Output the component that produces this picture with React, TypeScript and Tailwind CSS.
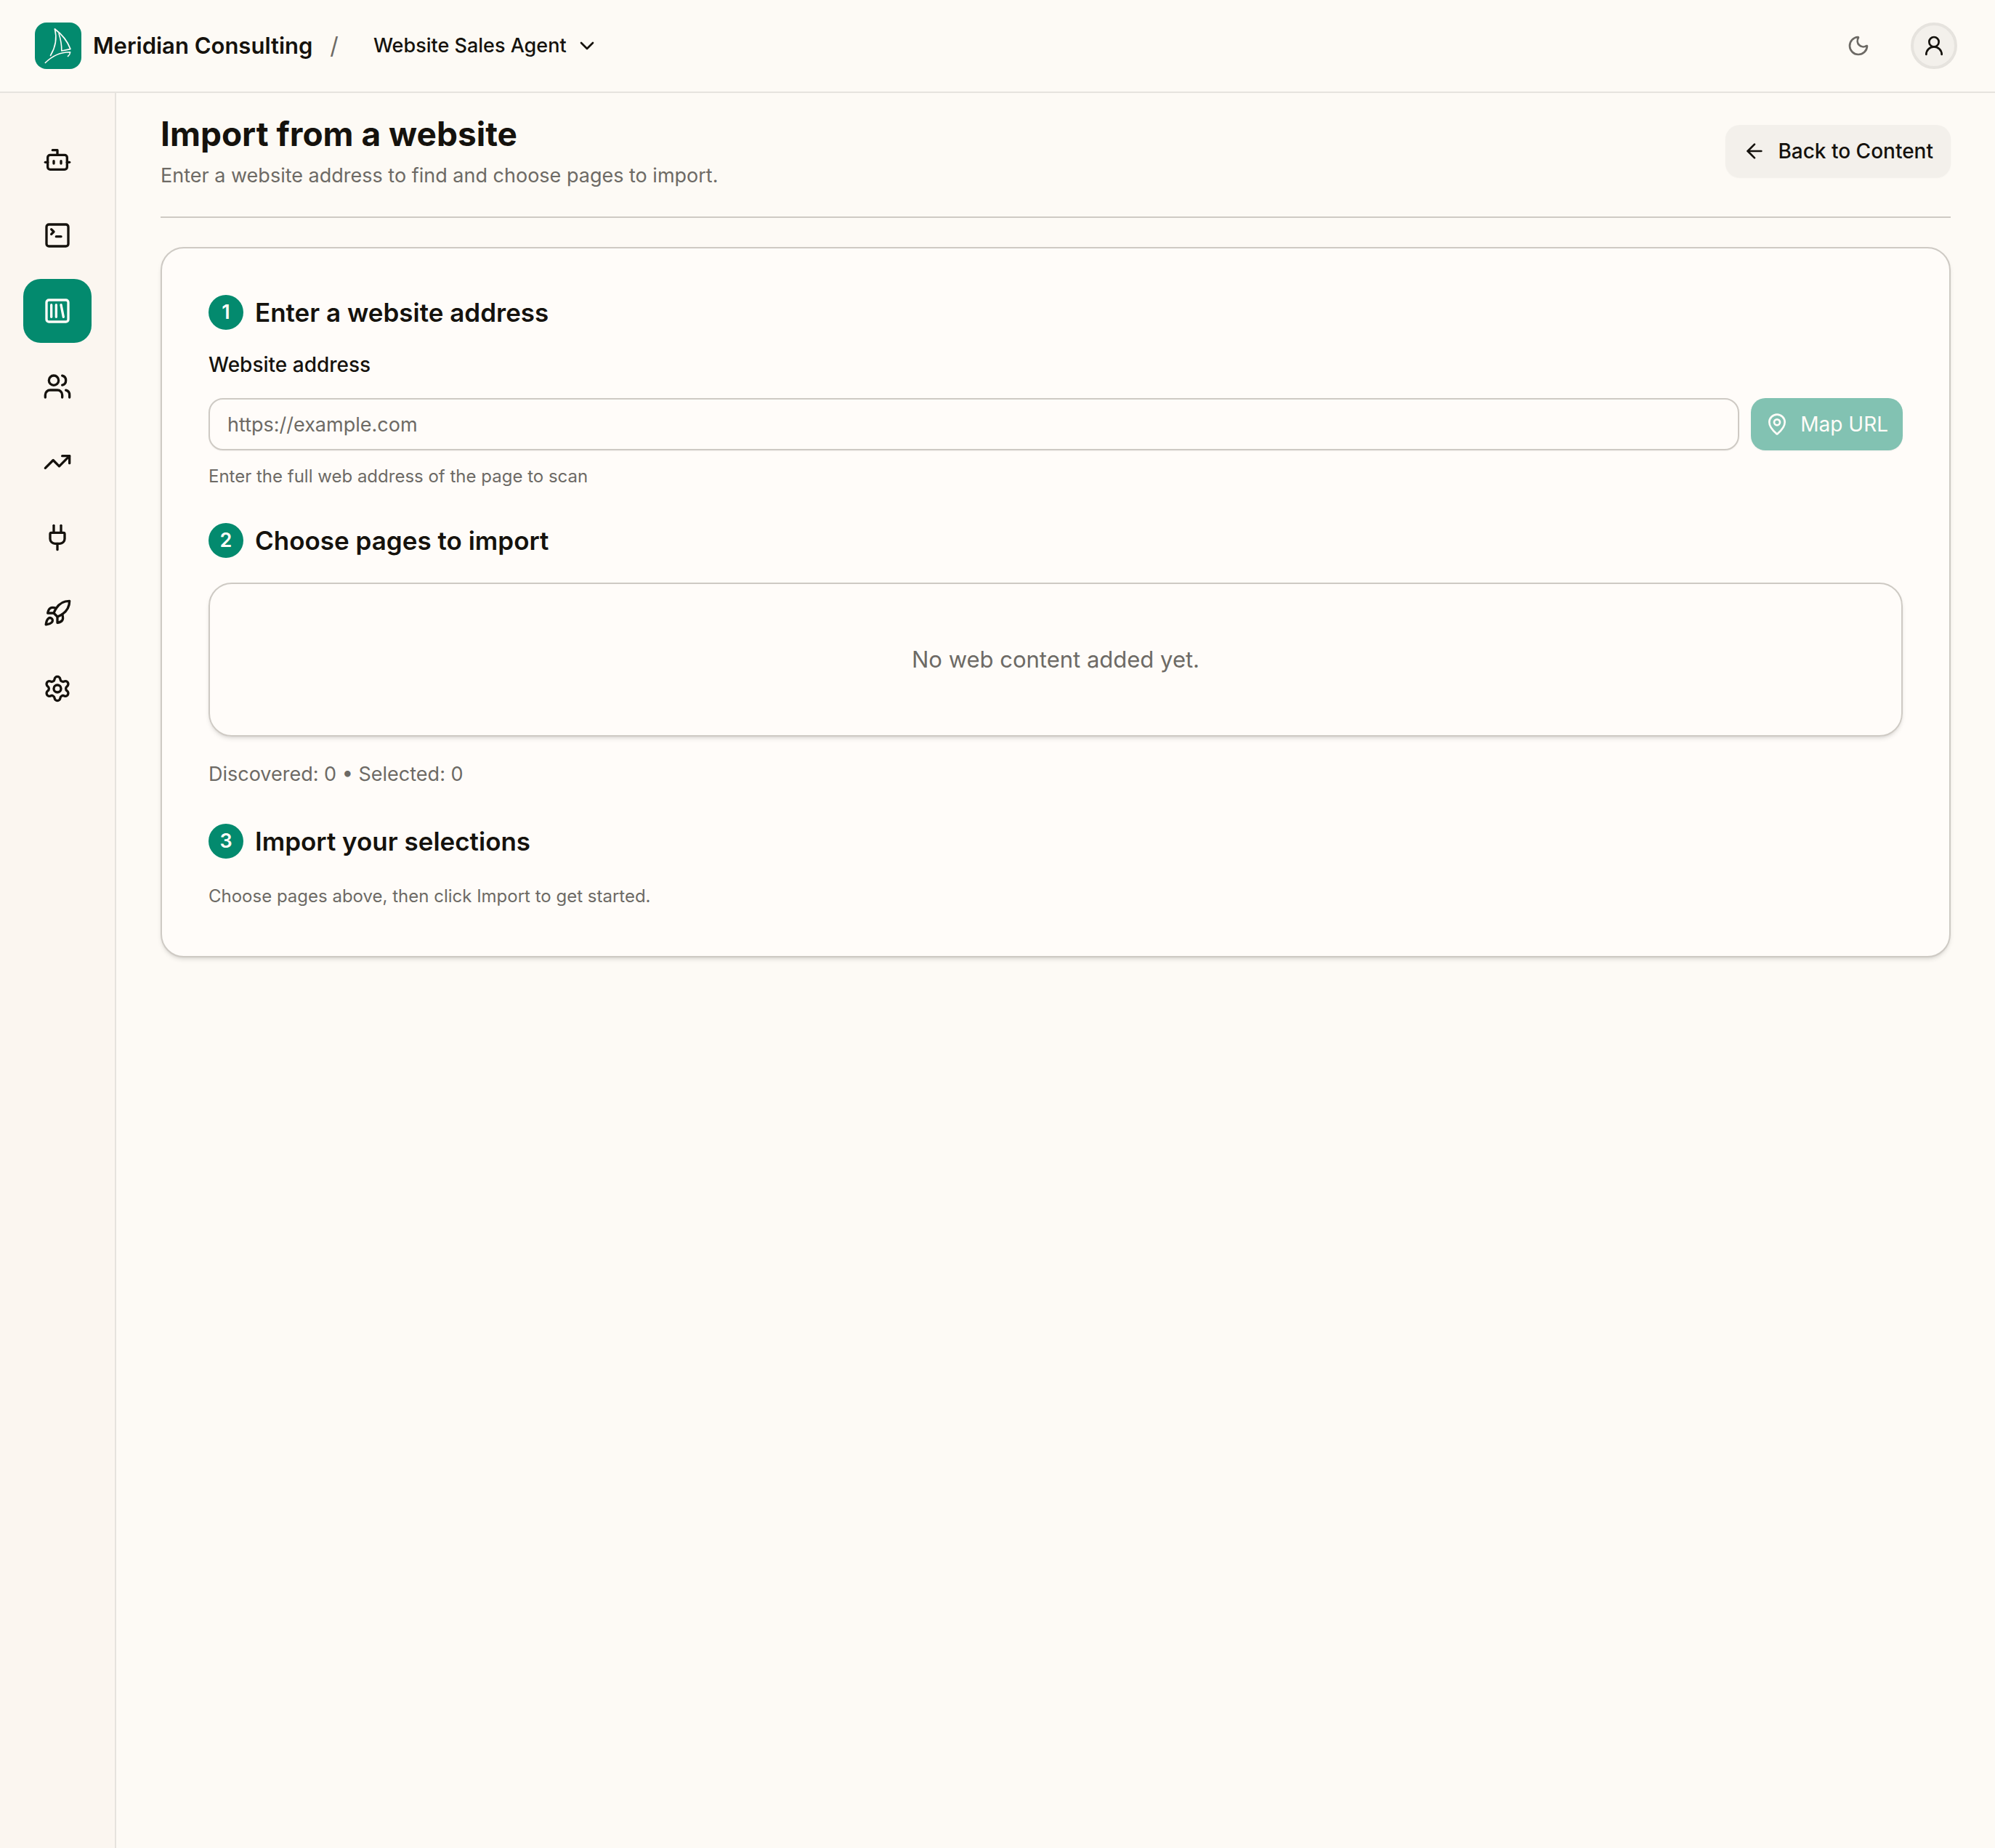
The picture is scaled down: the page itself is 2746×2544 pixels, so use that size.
import { useState } from "react";
import type { ReactNode } from "react";
import {
    ArrowLeft,
    Bot,
    ChevronDown,
    MapPin,
    Moon,
    Plug,
    Rocket,
    Settings,
    SquareLibrary,
    SquareTerminal,
    TrendingUp,
    UserRound,
    Users,
} from "lucide-react";

const navItems = [
    { label: "Agents", icon: Bot },
    { label: "Playground", icon: SquareTerminal },
    { label: "Content", icon: SquareLibrary },
    { label: "Leads", icon: Users },
    { label: "Analytics", icon: TrendingUp },
    { label: "Integrations", icon: Plug },
    { label: "Deploy", icon: Rocket },
    { label: "Settings", icon: Settings },
];

const Logo = () => (
    <span className="flex size-16 shrink-0 items-center justify-center rounded-2xl bg-[#038a6e]">
        <svg viewBox="0 0 64 64" className="size-16" fill="none" stroke="#fffcf8" strokeLinecap="round" strokeLinejoin="round">
            <path d="M27.5 9C30.5 21 29 33 21.5 45.5" strokeWidth="1.6" />
            <path d="M27.5 9C37 16 44.5 25 48.7 36" strokeWidth="1.8" />
            <path d="M33 15C35.5 23 37 31 36.8 39L48.7 36.6" strokeWidth="1.6" />
            <path d="M14.3 55.5C24 46 35 40.5 48.7 40.8C48.5 43 47.5 45 45.5 46.5" strokeWidth="1.6" />
        </svg>
    </span>
);

const Header = () => (
    <header className="flex h-32 items-center border-b-2 border-[#e6e3de] pl-12 pr-[52px]">
        <Logo />
        <span className="ml-4 text-[31px] font-semibold">Meridian Consulting</span>
        <span className="ml-6 text-[32px] text-[#6d6a65]">/</span>
        <button type="button" className="ml-12 flex items-center gap-3 text-[27px] font-medium">
            Website Sales Agent
            <ChevronDown className="size-8" />
        </button>
        <div className="ml-auto flex items-center gap-14">
            <button type="button" aria-label="Toggle dark mode" className="text-[#6d6a65]">
                <Moon className="size-8" />
            </button>
            <button type="button" aria-label="Account" className="flex size-16 items-center justify-center rounded-full border-4 border-[#e6e3de] bg-[#f3f0eb]">
                <UserRound className="size-8" />
            </button>
        </div>
    </header>
);

const Sidebar = () => {
    const [active, setActive] = useState("Content");

    return (
        <nav className="flex w-40 shrink-0 flex-col gap-4 border-r-2 border-[#e6e3de] bg-[#fbf6f0] px-8 pt-12">
            {navItems.map(({ label, icon: Icon }) => (
                <button
                    key={label}
                    type="button"
                    aria-label={label}
                    onClick={() => setActive(label)}
                    className={`flex h-[88px] items-center justify-center rounded-3xl ${active === label ? "bg-[#038a6e] text-[#fffcf8]" : ""}`}
                >
                    <Icon className="size-10" />
                </button>
            ))}
        </nav>
    );
};

const StepTitle = ({ step, children }: { step: number; children: ReactNode }) => (
    <div className="flex items-center gap-4">
        <span className="flex size-12 items-center justify-center rounded-full bg-[#038a6e] text-[27px] font-semibold text-[#fffcf8]">{step}</span>
        <h2 className="text-[35px] leading-12 font-semibold">{children}</h2>
    </div>
);

const App = () => {
    const [url, setUrl] = useState("");

    return (
        <div className="flex min-h-screen flex-col bg-[#fdfaf5] font-['Inter','Liberation_Sans',sans-serif] text-[#15120d]">
            <Header />
            <div className="flex flex-1">
                <Sidebar />
                <main className="min-w-0 flex-1 px-[61px] pt-6">
                    {/* Page heading */}
                    <div className="flex items-center justify-between border-b-2 border-[#cecac4] pb-[34px]">
                        <div>
                            <h1 className="text-[46px] leading-16 font-bold">Import from a website</h1>
                            <p className="mt-1 text-[27px] leading-11 text-[#6d6a65]">Enter a website address to find and choose pages to import.</p>
                        </div>
                        <button type="button" className="flex h-18 items-center gap-4 rounded-[20px] bg-[#f3f0eb] px-6 text-[28px] font-medium shadow-xs">
                            <ArrowLeft className="size-8" />
                            Back to Content
                        </button>
                    </div>

                    {/* Import steps */}
                    <div className="mt-10 rounded-[32px] border-2 border-[#cecac4] bg-[#fffcf9] px-16 pt-16 pb-[62px] shadow-md">
                        <section>
                            <StepTitle step={1}>Enter a website address</StepTitle>
                            <label htmlFor="website" className="mt-6 block text-[28px] leading-12 font-medium">Website address</label>
                            <div className="mt-[22px] flex gap-4">
                                <input
                                    id="website"
                                    type="url"
                                    value={url}
                                    onChange={(e) => setUrl(e.target.value)}
                                    placeholder="https://example.com"
                                    className="h-18 min-w-0 flex-1 rounded-[20px] border-2 border-[#cecac4] px-6 text-[27px] shadow-xs placeholder:text-[#6d6a65]"
                                />
                                <button type="button" disabled={!url} className="flex h-18 items-center gap-4 rounded-[20px] bg-[#038a6e] px-5 text-[28px] text-[#fffcf8] shadow-xs disabled:bg-[#82c2b2]">
                                    <MapPin className="size-8" />
                                    Map URL
                                </button>
                            </div>
                            <p className="mt-4 text-[24px] leading-10 text-[#6d6a65]">Enter the full web address of the page to scan</p>
                        </section>

                        <section className="mt-11">
                            <StepTitle step={2}>Choose pages to import</StepTitle>
                            <div className="mt-[34px] rounded-[32px] border-2 border-[#cecac4] py-20 text-center text-[31px] leading-12 text-[#6d6a65] shadow-md">
                                No web content added yet.
                            </div>
                            <p className="mt-8 text-[27px] leading-10 text-[#6d6a65]">Discovered: 0 • Selected: 0</p>
                        </section>

                        <section className="mt-12">
                            <StepTitle step={3}>Import your selections</StepTitle>
                            <p className="mt-8 text-[24px] leading-10 text-[#6d6a65]">Choose pages above, then click Import to get started.</p>
                        </section>
                    </div>
                </main>
            </div>
        </div>
    );
};

export default App;
